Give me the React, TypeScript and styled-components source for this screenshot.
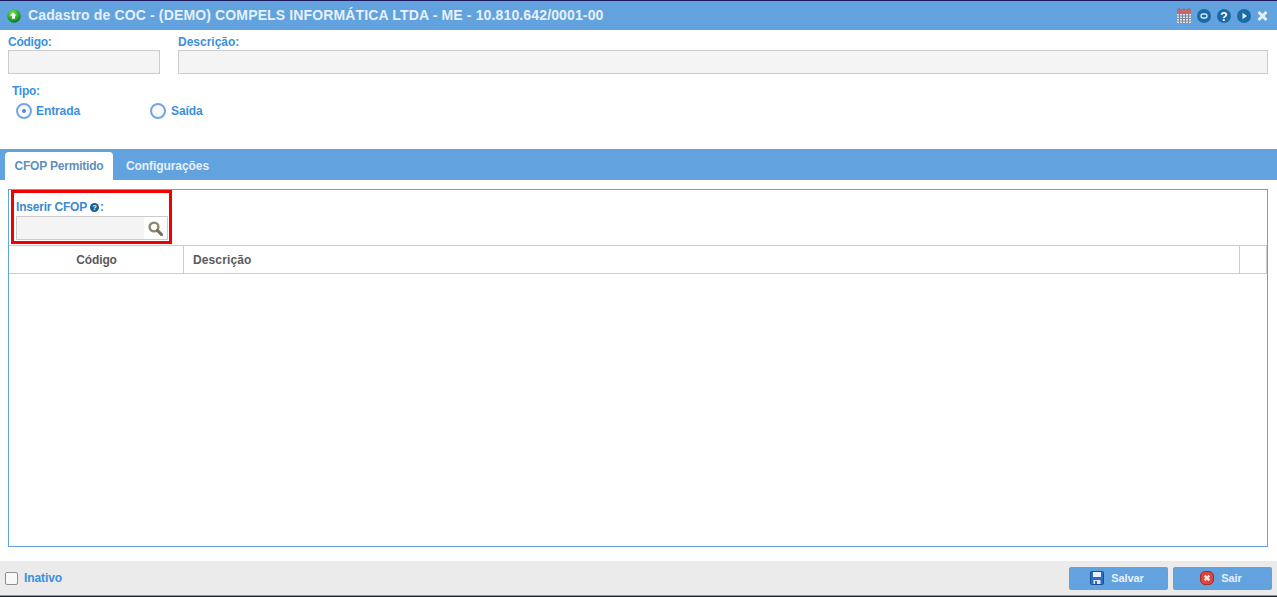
import * as React from 'react'
import styled, { createGlobalStyle } from 'styled-components'

const blue = '#62a3df'
const labelBlue = '#3a90de'

const GlobalStyle = createGlobalStyle`
  html, body {
    margin: 0;
    padding: 0;
    height: 597px;
    overflow: hidden;
    background: #fff;
    font-family: "Liberation Sans", Arial, sans-serif;
  }
`

const Page = styled.div`
  width: 1277px;
  height: 597px;
  display: flex;
  flex-direction: column;
  border-top: 1px solid #1a1a5c;
  box-sizing: border-box;
`

const TitleBar = styled.header`
  height: 29px;
  flex: none;
  background: ${blue};
  display: flex;
  align-items: center;
  padding: 0 9px 0 7px;
`

const Title = styled.h1`
  margin: 0 0 0 7px;
  font-size: 14px;
  line-height: 29px;
  font-weight: 700;
  color: #e6f0fa;
  flex: 1;
  letter-spacing: 0.14px;
`

const TitleIcons = styled.div`
  display: flex;
  align-items: center;
  gap: 6px;
`

const FormArea = styled.section`
  height: 119px;
  flex: none;
  padding: 4px 9px 0 8px;
  box-sizing: border-box;
`

const FieldRow = styled.div`
  display: flex;
  gap: 18px;
`

const Field = styled.div<{ $width?: number }>`
  display: flex;
  flex-direction: column;
  flex: ${(p) => (p.$width ? `0 0 ${p.$width}px` : '1')};
`

const Label = styled.label<{ $tight?: boolean }>`
  font-size: 12px;
  line-height: 16px;
  font-weight: 700;
  color: ${labelBlue};
  letter-spacing: ${(p) => (p.$tight ? '-0.25px' : '0')};
`

const TextInput = styled.div`
  height: 24px;
  box-sizing: border-box;
  background: #f4f4f4;
  border: 1px solid #cccccc;
`

const TipoBlock = styled.div`
  margin: 7px 0 0 4px;
`

const RadioRow = styled.div`
  display: flex;
  margin-top: 3px;
  padding-left: 4px;
`

const RadioItem = styled.div<{ $width: number; $gap: number }>`
  display: flex;
  align-items: center;
  gap: ${(p) => p.$gap}px;
  width: ${(p) => p.$width}px;
  font-size: 12px;
  font-weight: 700;
  color: ${labelBlue};
  line-height: 16px;
  letter-spacing: -0.1px;
`

const RadioText = styled.span`
  margin-top: 1px;
`

const RadioCircle = styled.span<{ $checked?: boolean }>`
  width: 16px;
  height: 16px;
  box-sizing: border-box;
  border-radius: 50%;
  border: 2px solid #74a6e2;
  background: #f6f8fb;
  display: flex;
  align-items: center;
  justify-content: center;
  &::after {
    content: '';
    display: ${(p) => (p.$checked ? 'block' : 'none')};
    width: 4px;
    height: 4px;
    border-radius: 50%;
    background: #4f8bd0;
  }
`

const TabBar = styled.nav`
  height: 31px;
  flex: none;
  background: ${blue};
  display: flex;
  align-items: flex-end;
  padding-left: 5px;
`

const Tab = styled.div<{ $active?: boolean }>`
  height: 28px;
  box-sizing: border-box;
  padding: 0 ${(p) => (p.$active ? '9.5px' : '13px')};
  line-height: 28px;
  font-size: 12px;
  font-weight: 700;
  border-radius: 4px 4px 0 0;
  letter-spacing: ${(p) => (p.$active ? '-0.2px' : '-0.08px')};
  background: ${(p) => (p.$active ? '#fff' : 'transparent')};
  color: ${(p) => (p.$active ? '#5f8fbc' : '#e6f0fa')};
`

const TabPanel = styled.main`
  flex: 1;
  min-height: 0;
  padding: 9px 9px 14px 8px;
  display: flex;
`

const PanelBox = styled.div`
  flex: 1;
  border: 1px solid ${blue};
  display: flex;
  flex-direction: column;
`

const Highlight = styled.div`
  width: 161px;
  height: 54px;
  box-sizing: border-box;
  margin: 0 0 1px 2px;
  border: 3px solid #f00000;
  padding: 7px 0 0 2px;
  flex: none;
`

const InsertLabel = styled.div`
  display: flex;
  align-items: center;
  font-size: 12px;
  font-weight: 700;
  line-height: 15px;
  letter-spacing: -0.2px;
  color: #3a8ad0;
`

const SearchField = styled.div`
  display: flex;
  height: 24px;
  width: 152px;
  box-sizing: border-box;
  border: 1px solid #cccccc;
  margin-top: 1px;
`

const SearchInput = styled.div`
  width: 127px;
  background: #f4f4f4;
`

const SearchButton = styled.div`
  flex: 1;
  background: #fff;
  display: flex;
  align-items: center;
  justify-content: center;
`

const TableHeader = styled.div`
  height: 29px;
  flex: none;
  box-sizing: border-box;
  display: grid;
  grid-template-columns: 175px 1fr 27px;
  border-top: 1px solid #cccccc;
  border-bottom: 1px solid #cccccc;
  font-size: 12px;
  font-weight: 700;
  color: #5a5a5a;
`

const HeaderCell = styled.div<{ $center?: boolean }>`
  border-right: 1px solid #cccccc;
  line-height: 28px;
  padding-left: ${(p) => (p.$center ? '1px' : '9px')};
  text-align: ${(p) => (p.$center ? 'center' : 'left')};
  letter-spacing: ${(p) => (p.$center ? '-0.1px' : '0.12px')};
`

const Footer = styled.footer`
  height: 34px;
  flex: none;
  background: #ebebeb;
  display: flex;
  align-items: center;
  justify-content: space-between;
  padding: 0 5px;
  box-sizing: border-box;
`

const CheckRow = styled.div`
  display: flex;
  align-items: center;
  gap: 6px;
  font-size: 12px;
  font-weight: 700;
  color: ${labelBlue};
  letter-spacing: -0.1px;
`

const CheckBox = styled.span`
  width: 13px;
  height: 13px;
  box-sizing: border-box;
  border: 1px solid #8f8f8f;
  border-radius: 2px;
  background: #f8f8f8;
`

const Buttons = styled.div`
  display: flex;
  gap: 5px;
`

const ActionButton = styled.div`
  width: 99px;
  height: 23px;
  box-sizing: border-box;
  background: ${blue};
  border-radius: 2px;
  display: flex;
  align-items: center;
  justify-content: center;
  gap: 7px;
  padding-right: 3px;
  font-size: 11px;
  font-weight: 700;
  color: #e6f0fa;
  letter-spacing: -0.1px;
`

const BottomEdge = styled.div`
  height: 2px;
  flex: none;
  background: ${blue};
  border-bottom: 1px solid #1c2b3a;
  box-sizing: border-box;
`

const CircleIcon = ({ children }: { children: React.ReactNode }) => (
  <svg width="14" height="14" viewBox="0 0 14 14">
    <circle cx="7" cy="7" r="7" fill="#1a6aa8" />
    {children}
  </svg>
)

const GreenIcon = () => (
  <svg width="14" height="14" viewBox="0 0 14 14">
    <defs>
      <radialGradient id="greenBall" cx="0.4" cy="0.3" r="0.8">
        <stop offset="0" stopColor="#7be05a" />
        <stop offset="0.6" stopColor="#25a52b" />
        <stop offset="1" stopColor="#0f5c18" />
      </radialGradient>
    </defs>
    <circle cx="7" cy="7" r="6.7" fill="url(#greenBall)" />
    <path d="M6 3.4 L9.6 6.6 H8 V9.8 H5 V6.6 H2.8 Z" fill="#fff" />
  </svg>
)

const CalendarIcon = () => (
  <svg width="14" height="15" viewBox="0 0 14 15">
    <rect x="0" y="1" width="14" height="14" fill="#e3e5ea" />
    <rect x="0" y="1" width="14" height="4" fill="#c9656d" />
    <path d="M2 0v2M7 0v2M12 0v2" stroke="#6d7380" strokeWidth="1" />
    <path d="M0 5.5h14M0 8h14M0 10.5h14M0 13h14M2.5 5v10M5.5 5v10M8.5 5v10M11.5 5v10" stroke="#65738c" strokeWidth="0.8" />
  </svg>
)

const SearchGlyph = () => (
  <svg width="15" height="15" viewBox="0 0 15 15">
    <circle cx="6" cy="6" r="4.4" fill="none" stroke="#8d8572" strokeWidth="2.4" />
    <path d="M9.4 9.4 L13.6 13.6" stroke="#76705f" strokeWidth="3" strokeLinecap="round" />
  </svg>
)

const HelpGlyph = () => (
  <svg width="9" height="9" viewBox="0 0 10 10" style={{ margin: '0 1px 0 3px' }}>
    <circle cx="5" cy="5" r="5" fill="#155f96" />
    <text x="5" y="8.2" fontSize="8.5" fontWeight="700" textAnchor="middle" fill="#fff" fontFamily="Liberation Sans">?</text>
  </svg>
)

const SaveIcon = () => (
  <svg width="14" height="14" viewBox="0 0 14 14">
    <rect x="0.5" y="0.5" width="13" height="13" rx="1" fill="#2b6cc4" stroke="#1c4c94" />
    <rect x="3" y="1" width="8" height="5" fill="#e8f0fa" />
    <rect x="3.5" y="9" width="7" height="4" fill="#dfe6ee" />
    <rect x="5" y="10" width="2" height="3" fill="#2b6cc4" />
  </svg>
)

const ExitIcon = () => (
  <svg width="14" height="14" viewBox="0 0 14 14">
    <rect x="0.5" y="0.5" width="13" height="13" rx="4.5" fill="#dc4640" stroke="#a92a25" />
    <path d="M4.6 4.6 L9.4 9.4 M9.4 4.6 L4.6 9.4" stroke="#fbe6e4" strokeWidth="2.2" />
  </svg>
)

export default function App() {
  return (
    <>
      <GlobalStyle />
      <Page>
        <TitleBar>
          <GreenIcon />
          <Title>Cadastro de COC - (DEMO) COMPELS INFORMÁTICA LTDA - ME - 10.810.642/0001-00</Title>
          <TitleIcons>
            <CalendarIcon />
            <CircleIcon>
              <rect x="4" y="5" width="6" height="4" rx="2" fill="none" stroke="#dcebf7" strokeWidth="1.3" />
            </CircleIcon>
            <CircleIcon>
              <text x="7" y="11.5" fontSize="12" fontWeight="700" textAnchor="middle" fill="#fff" fontFamily="Liberation Sans">?</text>
            </CircleIcon>
            <CircleIcon>
              <path d="M5.5 3.8 L10 7 L5.5 10.2 Z" fill="#e4f0fa" />
            </CircleIcon>
            <svg width="11" height="12" viewBox="0 0 11 12">
              <path d="M1.5 2 L9.5 10 M9.5 2 L1.5 10" stroke="#e6f0fa" strokeWidth="3" />
            </svg>
          </TitleIcons>
        </TitleBar>

        <FormArea>
          <FieldRow>
            <Field $width={152}>
              <Label $tight>Código:</Label>
              <TextInput />
            </Field>
            <Field>
              <Label>Descrição:</Label>
              <TextInput />
            </Field>
          </FieldRow>
          <TipoBlock>
            <Label $tight>Tipo:</Label>
            <RadioRow>
              <RadioItem $width={134} $gap={4}>
                <RadioCircle $checked />
                <RadioText>Entrada</RadioText>
              </RadioItem>
              <RadioItem $width={80} $gap={5}>
                <RadioCircle />
                <RadioText>Saída</RadioText>
              </RadioItem>
            </RadioRow>
          </TipoBlock>
        </FormArea>

        <TabBar>
          <Tab $active>CFOP Permitido</Tab>
          <Tab>Configurações</Tab>
        </TabBar>

        <TabPanel>
          <PanelBox>
            <Highlight>
              <InsertLabel>
                Inserir CFOP
                <HelpGlyph />:
              </InsertLabel>
              <SearchField>
                <SearchInput />
                <SearchButton>
                  <SearchGlyph />
                </SearchButton>
              </SearchField>
            </Highlight>
            <TableHeader>
              <HeaderCell $center>Código</HeaderCell>
              <HeaderCell>Descrição</HeaderCell>
              <HeaderCell />
            </TableHeader>
          </PanelBox>
        </TabPanel>

        <Footer>
          <CheckRow>
            <CheckBox />
            Inativo
          </CheckRow>
          <Buttons>
            <ActionButton>
              <SaveIcon />
              Salvar
            </ActionButton>
            <ActionButton>
              <ExitIcon />
              Sair
            </ActionButton>
          </Buttons>
        </Footer>
        <BottomEdge />
      </Page>
    </>
  )
}
